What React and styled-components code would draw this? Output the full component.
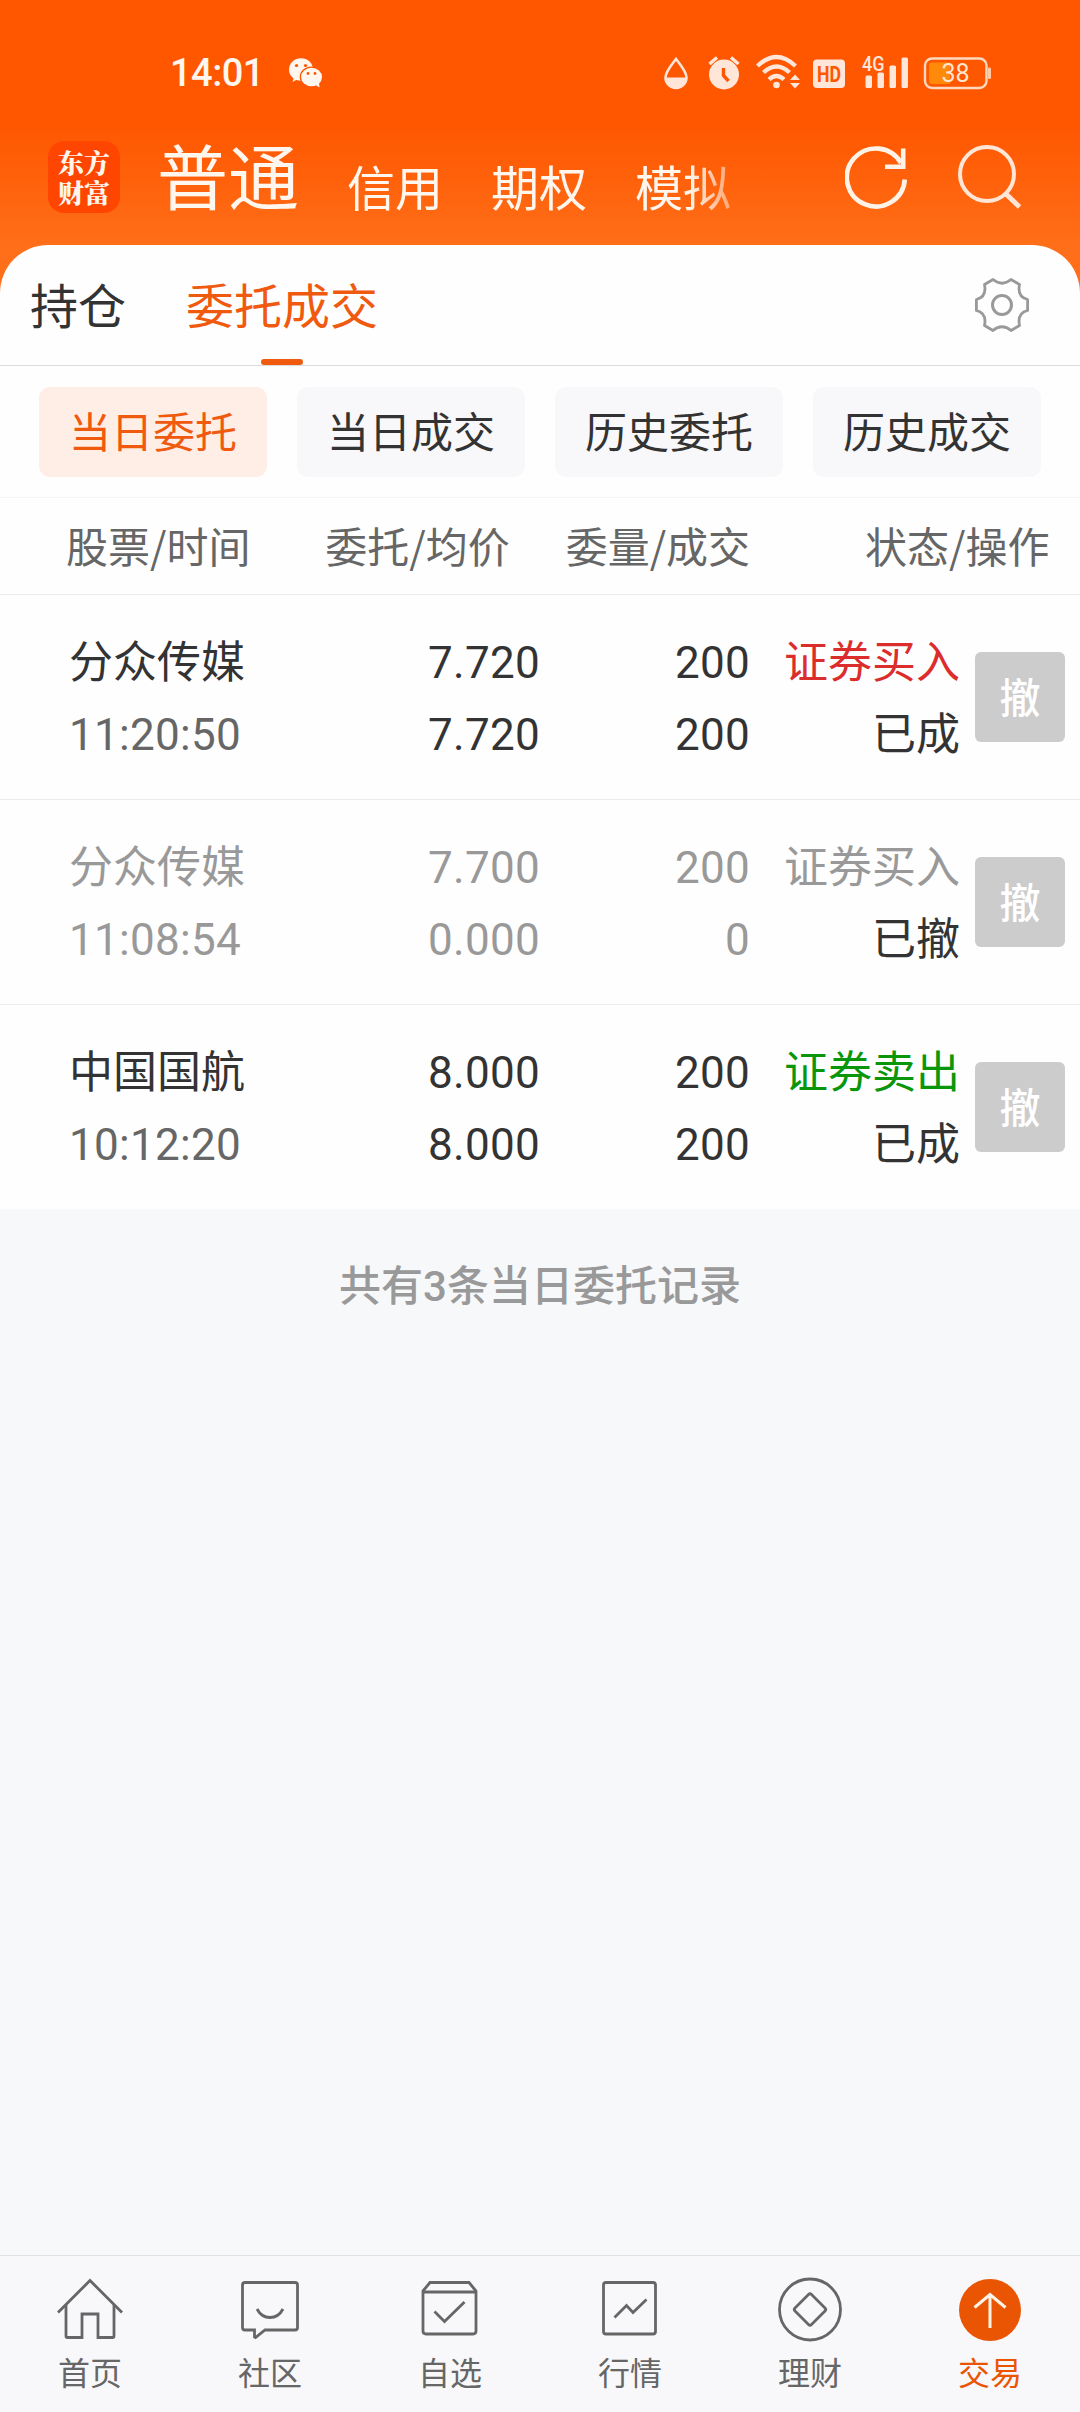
import React from 'react';
import styled, { createGlobalStyle } from "styled-components";

const GlobalStyle = createGlobalStyle`
    * {
        box-sizing: border-box;
    }

    body {
        margin: 0;
        background: #f7f8fa;
        font-family: Roboto, "Noto Sans CJK SC", sans-serif;
    }
`;

const Page = styled.div`
    display: flex;
    flex-direction: column;
    width: 1080px;
    height: 2412px;
    background: linear-gradient(#ff5600 0, #ff5600 122px, #ff6e18 245px, #ff6e18 300px, #f7f8fa 300px);
`;

const StatusBar = styled.div`
    display: flex;
    align-items: center;
    height: 134px;
    padding: 12px 89px 0 170px;
`;

const Clock = styled.span`
    width: 119px;
    font-size: 38px;
    line-height: 40px;
    font-weight: 500;
    letter-spacing: -0.5px;
    color: #fff6ee;
`;

const StatusIcons = styled.svg`
    margin-left: auto;
`;

const Header = styled.header`
    display: flex;
    align-items: flex-start;
    height: 111px;
    padding: 7px 58px 0 48px;
`;

const Logo = styled.div`
    width: 72px;
    height: 72px;
    padding: 6px 9px 0 10px;
    border-radius: 16px;
    background: #ff4600;
    color: #fff6ee;
    font-family: "Noto Serif CJK SC", "Noto Sans CJK SC", serif;
    font-size: 26px;
    font-weight: 900;
    line-height: 30px;
    word-break: break-all;
`;

const AccountTabs = styled.nav`
    display: flex;
    align-items: flex-end;
    gap: 48px;
    width: 620px;
    height: 78px;
    margin-left: 37px;
    mask-image: linear-gradient(to right, #000 532px, transparent 607px);
`;

const AccountTab = styled.span`
    flex: none;
    color: #fff6ee;
    font-size: ${(props) => (props.$active ? "71px" : "48px")};
    line-height: ${(props) => (props.$active ? "80px" : "60px")};
    margin-bottom: -1px;
`;

const HeaderActions = styled.div`
    display: flex;
    gap: 49px;
    margin-left: auto;
    padding-top: 4px;
`;

const Panel = styled.main`
    border-radius: 48px 48px 0 0;
    background: #fefefe;
`;

const PageTabs = styled.div`
    display: flex;
    align-items: stretch;
    height: 121px;
    padding: 0 51px 0 30px;
    border-bottom: 1px solid #dcdcdc;
`;

const PageTab = styled.div`
    display: flex;
    flex-direction: column;
    align-items: center;
    justify-content: space-between;
    margin-right: 60px;
    padding-top: 33px;
    font-size: 48px;
    line-height: 60px;
    color: ${(props) => (props.$active ? "#f05a0f" : "#333")};

    &::after {
        content: "";
        width: 42px;
        height: 6px;
        border-radius: 3px;
        background: ${(props) => (props.$active ? "#f05a0f" : "transparent")};
    }
`;

const GearIcon = styled.svg`
    margin: 33px 0 0 auto;
`;

const Filters = styled.div`
    display: flex;
    gap: 30px;
    height: 132px;
    padding: 21px 39px;
    border-bottom: 1px solid #f4f4f4;
`;

const FilterButton = styled.button`
    flex: 1;
    height: 90px;
    padding: 4px 0 0;
    border: none;
    border-radius: 11px;
    background: ${(props) => (props.$active ? "#ffeee6" : "#f8f8fa")};
    color: ${(props) => (props.$active ? "#f05a0f" : "#333")};
    font-family: inherit;
    font-size: 42px;
    line-height: 86px;
`;

const columns = `
    display: grid;
    grid-template-columns: 260px 211px 210px 210px 105px;
    padding-left: 69px;
`;

const TableHead = styled.div`
    display: flex;
    justify-content: space-between;
    height: 97px;
    padding: 0 30px 0 66px;
    border-bottom: 1px solid #ececec;
    font-family: "Noto Sans CJK SC", sans-serif;
    font-size: 42px;
    line-height: 93px;
    color: #666;
`;

const HeadCell = styled.span`
    width: 185px;
    margin-right: ${(props) => props.$gap || 0}px;
    white-space: nowrap;
`;

const OrderRow = styled.div`
    ${columns}
    height: 205px;
    padding-top: 32px;
    border-bottom: 1px solid #ececec;
    color: ${(props) => (props.$muted ? "#999" : "#333")};

    &:last-child {
        height: 204px;
        border-bottom: none;
    }
`;

const Cell = styled.div`
    display: flex;
    flex-direction: column;
    text-align: ${(props) => props.$align || "right"};
    font-size: 44px;
    line-height: 72px;
    white-space: nowrap;
`;

const Figure = styled.span`
    letter-spacing: 0.3px;
`;

const Time = styled.span`
    letter-spacing: 0.3px;
    color: ${(props) => (props.$muted ? "#999" : "#666")};
`;

const Side = styled.span`
    color: ${(props) => props.$color};
`;

const State = styled.span`
    color: #333;
`;

const CancelButton = styled.button`
    width: 90px;
    height: 90px;
    margin: 25px 0 0 15px;
    padding: 5px 0 0;
    border: none;
    border-radius: 6px;
    background: #ccc;
    color: #fff;
    font-family: inherit;
    font-size: 41px;
    font-weight: 500;
    line-height: 85px;
`;

const Rest = styled.div`
    flex: 1;
    background: #f7f8fa;
`;

const Summary = styled.p`
    margin: 47px 0 0;
    text-align: center;
    font-size: 42px;
    font-weight: 500;
    line-height: 62px;
    color: #999;
`;

const TabBar = styled.nav`
    display: flex;
    height: 157px;
    border-top: 1px solid #dfe2e3;
    background: #f8f8fb;
`;

const TabItem = styled.a`
    display: flex;
    flex: 1;
    flex-direction: column;
    align-items: center;
    padding-top: 20px;
    color: ${(props) => (props.$active ? "#ea5504" : "#666")};
    font-size: 32px;
    line-height: 44px;

    svg {
        margin-bottom: 8px;
    }
`;

const accounts = ["普通", "信用", "期权", "模拟"];
const filters = ["当日委托", "当日成交", "历史委托", "历史成交"];

const orders = [
    { name: "分众传媒", time: "11:20:50", price: "7.720", avg: "7.720", amount: "200", filled: "200", side: "证券买入", color: "#dc2d2d", state: "已成" },
    { name: "分众传媒", time: "11:08:54", price: "7.700", avg: "0.000", amount: "200", filled: "0", side: "证券买入", color: "#999", state: "已撤", muted: true },
    { name: "中国国航", time: "10:12:20", price: "8.000", avg: "8.000", amount: "200", filled: "200", side: "证券卖出", color: "#0a960a", state: "已成" },
];

const navItems = [
    {
        label: "首页",
        icon: (
            <>
                <path d="M2 36.500 L34 4.500 L66 36.500" />
                <path d="M10 29 V60 Q10 61.500 11.500 61.500 H26 V38 H42 V61.500 H56.500 Q58 61.500 58 60 V29" />
            </>
        ),
    },
    {
        label: "社区",
        icon: (
            <>
                <path d="M9 6.500 H59 Q61.500 6.500 61.500 9 V51.500 Q61.500 54 59 54 H29 L19.500 61.500 L18.500 61 V54 H9 Q6.500 54 6.500 51.500 V9 Q6.500 6.500 9 6.500 Z" />
                <path d="M21 33 Q25.500 41.500 34 41.500 Q42.500 41.500 47 33" />
            </>
        ),
    },
    {
        label: "自选",
        icon: (
            <>
                <path d="M7 15 L14 6.500 H53 L60 15 V55 Q60 58 57 58 H10 Q7 58 7 55 Z" />
                <path d="M7 16 H60" />
                <path d="M18.500 35.500 L28.500 45.500 L48.500 26" />
            </>
        ),
    },
    {
        label: "行情",
        icon: (
            <>
                <rect x="7.500" y="6.500" width="52" height="51.500" rx="2.500" />
                <path d="M18.500 41.500 L30.500 29.500 L37 36.500 L50.500 23.500" />
            </>
        ),
    },
    {
        label: "理财",
        icon: (
            <>
                <circle cx="34" cy="33.500" r="30.500" />
                <path d="M32.500 18.500 Q34 17 35.500 18.500 L49 32 Q50.500 33.500 49 35 L35.500 48.500 Q34 50 32.500 48.500 L19 35 Q17.500 33.500 19 32 Z" />
            </>
        ),
    },
    {
        label: "交易",
        active: true,
        icon: (
            <>
                <circle cx="34" cy="34" r="31" fill="#ea5504" stroke="none" />
                <path d="M34 52 V18 M18.500 31.500 L34 18.500 L49.500 31.500" stroke="#fff3e6" strokeWidth="3" />
            </>
        ),
    },
];

const WechatIcon = () => (
    <svg width="34" height="30" viewBox="0 0 34 30">
        <path d="M5 19 L3.500 24 L9 21 Z" fill="#fff6ee" />
        <ellipse cx="12" cy="11.500" rx="12" ry="11.300" fill="#fff6ee" />
        <ellipse cx="22.500" cy="19" rx="11.800" ry="10.500" fill="#ff5600" />
        <ellipse cx="22.500" cy="19" rx="10.500" ry="9.300" fill="#fff6ee" />
        <path d="M25 26 L30.500 29.500 L30 24 Z" fill="#fff6ee" />
        <g fill="#ff5600">
            <circle cx="7.500" cy="7.500" r="1.600" />
            <circle cx="16.500" cy="7.500" r="1.600" />
            <circle cx="19" cy="15.500" r="1.400" />
            <circle cx="26" cy="15.500" r="1.400" />
        </g>
    </svg>
);

const SystemIcons = () => (
    <StatusIcons width="328" height="54" viewBox="663 45.500 328 54" fill="#ffe6d9">
        {/* water drop */}
        <path d="M676 58.500 C671.500 64.500 665.500 71 665.500 77 A10.500 10.500 0 0 0 686.500 77 C686.500 71 680.500 64.500 676 58.500 Z" fill="none" stroke="#ffe6d9" strokeWidth="2.600" />
        <path d="M665 77 H687 A11 11 0 0 1 665 77 Z" />
        {/* alarm */}
        <circle cx="724" cy="74" r="15" />
        <path d="M709.500 63.500 L717 57 M738.500 63.500 L731 57" stroke="#ffe6d9" strokeWidth="3.400" />
        <path d="M723.500 67.500 V75 L728.500 80.500" fill="none" stroke="#ff5600" strokeWidth="3.400" />
        {/* wifi */}
        <g fill="none" stroke="#ffe6d9" strokeWidth="4.300">
            <path d="M757.500 65.500 Q776.500 47.500 795.500 65.500" />
            <path d="M763.500 72 Q776.500 60 789.500 72" />
            <path d="M769 79 Q776.500 72 784 79" />
        </g>
        <circle cx="776.500" cy="84.500" r="3.300" />
        <path d="M790 79.500 L795 74 L800 79.500 Z M790 82.500 H800 L795 88 Z" />
        {/* hd */}
        <rect x="813" y="59" width="32" height="28.500" rx="4" />
        <text x="829" y="81.500" textAnchor="middle" fontSize="22" fontWeight="700" fill="#ff5600" textLength="24" lengthAdjust="spacingAndGlyphs">HD</text>
        {/* signal */}
        <text x="862" y="70.500" fontSize="21" fontWeight="500" textLength="22.500" lengthAdjust="spacingAndGlyphs">4G</text>
        <rect x="865.500" y="75" width="6.500" height="12.500" rx="1.500" />
        <rect x="877.500" y="72" width="6.500" height="15.500" rx="1.500" />
        <rect x="889.500" y="65" width="6.500" height="22.500" rx="1.500" />
        <rect x="901.500" y="57" width="6.500" height="30.500" rx="1.500" />
        {/* battery */}
        <rect x="925" y="58" width="61.500" height="29.500" rx="7" fill="none" stroke="#ffd9bd" strokeWidth="2.400" />
        <path d="M932 62 H950 V83.500 H932 Q929 83.500 929 80.500 V65 Q929 62 932 62 Z" fill="#ff8a0a" />
        <rect x="988" y="67" width="3" height="11.500" rx="1.200" fill="#ffc9a3" />
        <text x="955.500" y="81.500" textAnchor="middle" fontSize="25" fill="#ffe6d0">38</text>
    </StatusIcons>
);

const App = () => {
    return (
        <>
            <GlobalStyle />
            <Page>
                <StatusBar>
                    <Clock>14:01</Clock>
                    <WechatIcon />
                    <SystemIcons />
                </StatusBar>

                <Header>
                    <Logo>东方财富</Logo>
                    <AccountTabs>
                        {accounts.map((name, i) => (
                            <AccountTab key={name} $active={i === 0}>{name}</AccountTab>
                        ))}
                    </AccountTabs>
                    <HeaderActions>
                        <svg width="64" height="66" viewBox="0 0 64 66" fill="none" stroke="#fff3e8" strokeWidth="4.600">
                            <path d="M59.800 34.500 A29 29 0 1 1 56 18" />
                            <path d="M58.200 3.500 V21.700 H40" />
                        </svg>
                        <svg width="64" height="66" viewBox="0 0 64 66" fill="none" stroke="#ffe6d6" strokeWidth="4">
                            <circle cx="29" cy="29" r="27" />
                            <path d="M48 49 L61.500 62" strokeWidth="5" />
                        </svg>
                    </HeaderActions>
                </Header>

                <Panel>
                    <PageTabs>
                        <PageTab>持仓</PageTab>
                        <PageTab $active>委托成交</PageTab>
                        <GearIcon width="54" height="54" viewBox="0 0 54 54" fill="none" stroke="#999" strokeWidth="2.800" strokeLinejoin="round">
                            <path d="M18 1.500 Q27 9 36 1.500 L44.500 6.500 Q42 19 52.600 21.500 V32.500 Q42 35 44.500 47.500 L36 52.500 Q27 45 18 52.500 L9.500 47.500 Q12 35 1.400 32.500 V21.500 Q12 19 9.500 6.500 Z" />
                            <circle cx="27" cy="27" r="9.500" strokeWidth="3" />
                        </GearIcon>
                    </PageTabs>

                    <Filters>
                        {filters.map((name, i) => (
                            <FilterButton key={name} $active={i === 0}>{name}</FilterButton>
                        ))}
                    </Filters>

                    <TableHead>
                        <HeadCell $gap={74}>股票/时间</HeadCell>
                        <HeadCell $gap={55}>委托/均价</HeadCell>
                        <HeadCell $gap={114}>委量/成交</HeadCell>
                        <HeadCell>状态/操作</HeadCell>
                    </TableHead>

                    <div>
                        {orders.map((order) => (
                            <OrderRow key={order.time} $muted={order.muted}>
                                <Cell $align="left">
                                    <span>{order.name}</span>
                                    <Time $muted={order.muted}>{order.time}</Time>
                                </Cell>
                                <Cell>
                                    <Figure>{order.price}</Figure>
                                    <Figure>{order.avg}</Figure>
                                </Cell>
                                <Cell>
                                    <Figure>{order.amount}</Figure>
                                    <Figure>{order.filled}</Figure>
                                </Cell>
                                <Cell>
                                    <Side $color={order.color}>{order.side}</Side>
                                    <State>{order.state}</State>
                                </Cell>
                                <CancelButton>撤</CancelButton>
                            </OrderRow>
                        ))}
                    </div>
                </Panel>

                <Rest>
                    <Summary>共有3条当日委托记录</Summary>
                </Rest>

                <TabBar>
                    {navItems.map((item) => (
                        <TabItem key={item.label} $active={item.active}>
                            <svg width="68" height="68" viewBox="0 0 68 68" fill="none" stroke="currentColor" strokeWidth="2.800">
                                {item.icon}
                            </svg>
                            {item.label}
                        </TabItem>
                    ))}
                </TabBar>
            </Page>
        </>
    );
};

export default App;
